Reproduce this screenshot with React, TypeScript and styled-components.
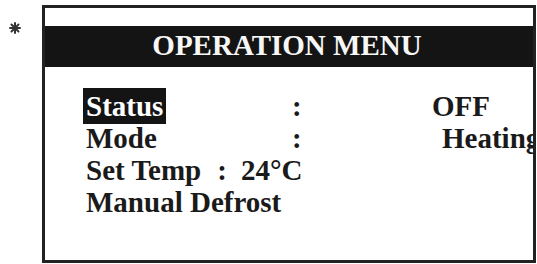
import React from "react";
import styled, { createGlobalStyle } from "styled-components";

/**
 * OperationMenu : controller screen - operation menu
 */

const GlobalStyle = createGlobalStyle`
  body {
    margin: 0;
    background: #fff;
  }
`;

type Row = {
  label: string;
  value: string;
  selected?: boolean;
  indent?: number;
};

const rows: Row[] = [
  { label: "Status", value: "OFF", selected: true },
  { label: "Mode", value: "Heating", indent: 10 },
];

const Asterisk = () => (
  <svg width="12" height="12" viewBox="0 0 12 12">
    <g stroke="#333" strokeWidth="2" strokeLinecap="round">
      <line x1="6" y1="1" x2="6" y2="11" />
      <line x1="1" y1="6" x2="11" y2="6" />
      <line x1="2.5" y1="2.5" x2="9.5" y2="9.5" />
      <line x1="9.5" y1="2.5" x2="2.5" y2="9.5" />
    </g>
  </svg>
);

const App = () => {
  return (
    <Page>
      <GlobalStyle />
      <Marker>
        <Asterisk />
      </Marker>
      <Screen>
        <Title>OPERATION MENU</Title>
        <List>
          {rows.map((row) => (
            <Line key={row.label}>
              <Label>
                {row.selected ? <Highlight>{row.label}</Highlight> : row.label}
              </Label>
              <Colon>:</Colon>
              <Value $indent={row.indent ?? 0}>{row.value}</Value>
            </Line>
          ))}
          <Line>
            <Inline>
              Set Temp
              <Sep>:</Sep>
              24°C
            </Inline>
          </Line>
          <Line>
            <Inline>Manual Defrost</Inline>
          </Line>
        </List>
      </Screen>
    </Page>
  );
};

export default App;

const Page = styled.div`
  display: flex;
  padding-top: 5px;
  font-family: "Liberation Serif", "Times New Roman", serif;
  font-weight: bold;
  color: #1a1a1a;
`;

const Marker = styled.div`
  width: 42px;
  padding: 15px 0 0 9px;
  box-sizing: border-box;
`;

const Screen = styled.div`
  width: 494px;
  height: 258px;
  box-sizing: border-box;
  border: 3px solid #222;
  padding-top: 18px;
  overflow: hidden;
`;

const Title = styled.div`
  height: 41px;
  line-height: 39px;
  background: #141414;
  color: #f7f7f7;
  font-size: 29px;
  text-align: center;
  padding-right: 4px;
`;

const List = styled.div`
  display: flex;
  flex-direction: column;
  margin-top: 23px;
  padding-left: 41px;
`;

const Line = styled.div`
  display: grid;
  grid-template-columns: 206px 140px auto;
  height: 32px;
  line-height: 32px;
  font-size: 29px;
  white-space: nowrap;
`;

const Label = styled.div``;

const Highlight = styled.span`
  background: #141414;
  color: #fff;
  padding: 2px 3px;
  margin: 0 -3px;
`;

const Colon = styled.div``;

const Value = styled.div<{ $indent: number }>`
  padding-left: ${(p) => p.$indent}px;
`;

const Inline = styled.div`
  grid-column: 1 / -1;
`;

const Sep = styled.span`
  margin: 0 14px 0 16px;
`;
